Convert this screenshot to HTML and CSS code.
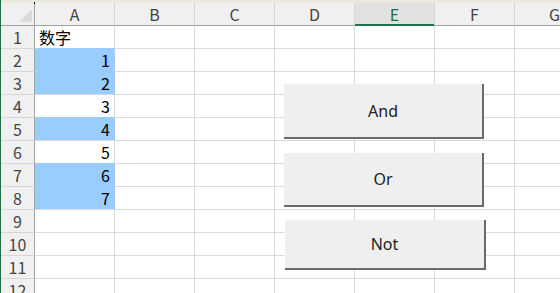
FILE: index.html
```html
<!DOCTYPE html>
<html>
<head>
<meta charset="utf-8">
<link rel="stylesheet" href="styles.css">
</head>
<body>
<div class="app">
  <div class="strip"><span class="dot"></span></div>
  <div class="sheet">
    <div class="hd corner"><svg width="13" height="13" viewBox="0 0 13 13"><polygon points="0,13 13,13 13,0" fill="#dadada"/></svg></div>
    <div class="hd col">A</div>
    <div class="hd col">B</div>
    <div class="hd col">C</div>
    <div class="hd col">D</div>
    <div class="hd col sel">E</div>
    <div class="hd col">F</div>
    <div class="hd col">G</div>

    <div class="hd row">1</div><div class="c txt above">数字</div><div class="c"></div><div class="c"></div><div class="c"></div><div class="c"></div><div class="c"></div><div class="c"></div>
    <div class="hd row">2</div><div class="c num fill above">1</div><div class="c"></div><div class="c"></div><div class="c"></div><div class="c"></div><div class="c"></div><div class="c"></div>
    <div class="hd row">3</div><div class="c num fill">2</div><div class="c"></div><div class="c"></div><div class="c"></div><div class="c"></div><div class="c"></div><div class="c"></div>
    <div class="hd row">4</div><div class="c num above">3</div><div class="c"></div><div class="c"></div><div class="c"></div><div class="c"></div><div class="c"></div><div class="c"></div>
    <div class="hd row">5</div><div class="c num fill">4</div><div class="c"></div><div class="c"></div><div class="c"></div><div class="c"></div><div class="c"></div><div class="c"></div>
    <div class="hd row">6</div><div class="c num above">5</div><div class="c"></div><div class="c"></div><div class="c"></div><div class="c"></div><div class="c"></div><div class="c"></div>
    <div class="hd row">7</div><div class="c num fill above">6</div><div class="c"></div><div class="c"></div><div class="c"></div><div class="c"></div><div class="c"></div><div class="c"></div>
    <div class="hd row">8</div><div class="c num fill">7</div><div class="c"></div><div class="c"></div><div class="c"></div><div class="c"></div><div class="c"></div><div class="c"></div>
    <div class="hd row">9</div><div class="c"></div><div class="c"></div><div class="c"></div><div class="c"></div><div class="c"></div><div class="c"></div><div class="c"></div>
    <div class="hd row">10</div><div class="c"></div><div class="c"></div><div class="c"></div><div class="c"></div><div class="c"></div><div class="c"></div><div class="c"></div>
    <div class="hd row">11</div><div class="c"></div><div class="c"></div><div class="c"></div><div class="c"></div><div class="c"></div><div class="c"></div><div class="c"></div>
    <div class="hd row">12</div><div class="c"></div><div class="c"></div><div class="c"></div><div class="c"></div><div class="c"></div><div class="c"></div><div class="c"></div>
  </div>
  <button class="btn btn-and">And</button>
  <button class="btn btn-or">Or</button>
  <button class="btn btn-not">Not</button>
</div>
</body>
</html>
```
FILE: styles.css
```css
html, body {
  margin: 0;
  padding: 0;
  background: #ffffff;
}
body {
  width: 560px;
  height: 293px;
  overflow: hidden;
}
.app {
  position: relative;
  width: 559px;
  height: 293px;
  border-left: 1px solid #217346;
  overflow: hidden;
}
.strip {
  height: 3px;
  background: #ebe9dd;
  position: relative;
}
.dot {
  position: absolute;
  left: 33px;
  top: 2px;
  width: 1px;
  height: 2px;
  background: #000;
}
.sheet {
  display: grid;
  grid-template-columns: 34px repeat(7, 80px);
  grid-template-rows: 23px;
  grid-auto-rows: 23px;
  font-family: "Noto Sans CJK SC", "Noto Sans", sans-serif;
}
.sheet > div {
  box-sizing: border-box;
}
.hd {
  background: #f0f0f0;
  color: #444444;
  font-size: 16px;
  display: flex;
  align-items: center;
  justify-content: center;
  line-height: 1;
}
.col {
  border-right: 1px solid #d6d6d6;
  border-bottom: 1px solid #a3a3a3;
}
.corner {
  border-right: 1px solid #a3a3a3;
  border-bottom: 1px solid #a3a3a3;
  justify-content: flex-end;
  align-items: flex-end;
  padding: 0 2px 3px 0;
}
.corner svg {
  display: block;
}
.sel {
  background: #e1e1e1;
  color: #1e6b46;
  border-bottom-color: #217346;
  box-shadow: inset 0 -1px 0 #217346;
}
.row {
  border-right: 1px solid #a3a3a3;
  border-bottom: 1px solid #d6d6d6;
}
.c {
  border-right: 1px solid #dadada;
  border-bottom: 1px solid #dadada;
  font-size: 16px;
  color: #000;
  display: flex;
  align-items: center;
  line-height: 1;
}
.txt {
  padding-left: 4px;
}
.num {
  justify-content: flex-end;
  padding-right: 4px;
}
.fill {
  background: #99ccff;
  border-right-color: #99ccff;
}
.above {
  border-bottom-color: #99ccff;
}
.btn {
  position: absolute;
  box-sizing: border-box;
  margin: 0;
  padding: 0;
  background: #efefef;
  border: none;
  border-right: 2px solid #6a6a6a;
  border-bottom: 2px solid #6a6a6a;
  font-family: "Noto Sans", "Open Sans", sans-serif;
  font-size: 16px;
  color: #222222;
}
.btn-and {
  left: 283px;
  top: 84px;
  width: 200px;
  height: 55px;
}
.btn-or {
  left: 283px;
  top: 153px;
  width: 200px;
  height: 54px;
}
.btn-not {
  left: 284px;
  top: 220px;
  width: 201px;
  height: 50px;
}
```
